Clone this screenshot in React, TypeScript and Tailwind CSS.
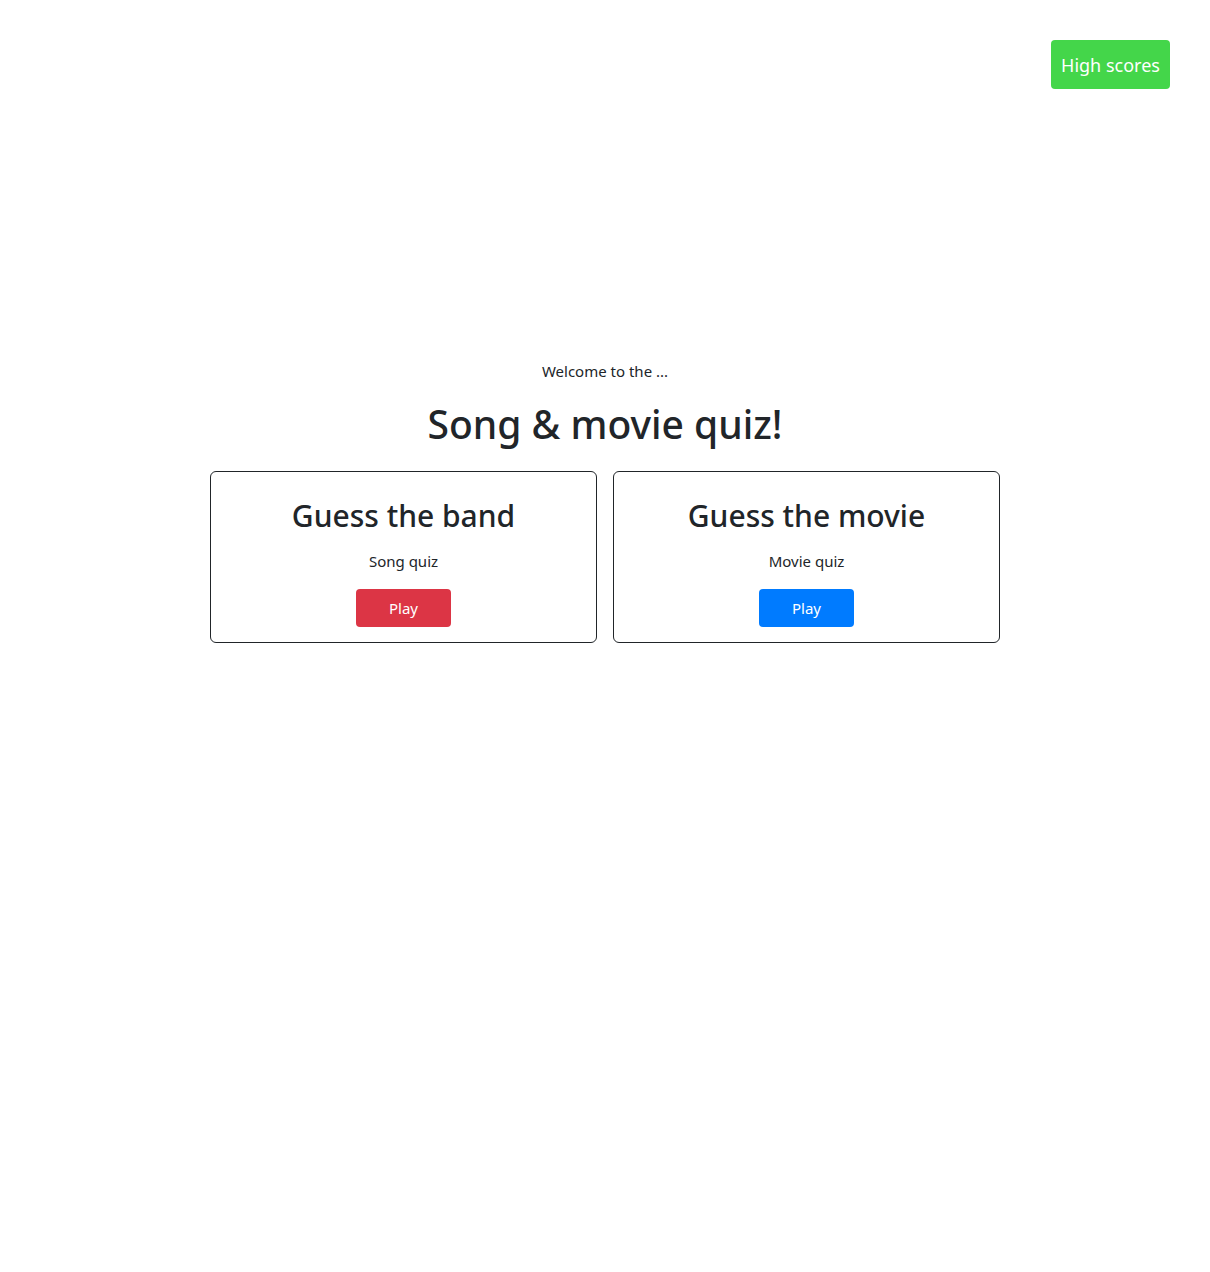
export default function App() {
  const quizzes = [
    { id: 1, title: "Guess the band", subtitle: "Song quiz", button: "bg-[#dc3545]" },
    { id: 2, title: "Guess the movie", subtitle: "Movie quiz", button: "bg-[#007bff]" },
  ];

  return (
    <div className="min-h-[1272px] bg-white text-[#212529] font-['Noto_Sans',sans-serif]">
      <div className="flex justify-end pt-[40px] pr-[40px]">
        <button className="h-[49px] w-[119px] rounded-[4px] bg-[#44d64a] pt-[1px] text-[18px] text-white">
          High scores
        </button>
      </div>

      <div className="mt-[270px] flex flex-col items-center">
        <p className="text-[15px] leading-[24px]">Welcome to the ...</p>
        <h1 className="mt-[17px] text-[39px] font-medium leading-[48px]">Song &amp; movie quiz!</h1>

        <div className="mt-[23px] flex gap-[16px]">
          {quizzes.map((quiz) => (
            <div
              key={quiz.id}
              className="flex h-[172px] w-[387px] flex-col items-center rounded-[6px] border border-[#212529] pt-[25px]"
            >
              <h2 className="text-[30px] font-medium leading-[38px]">{quiz.title}</h2>
              <p className="mt-[14px] text-[15px] leading-[24px]">{quiz.subtitle}</p>
              <button
                className={`mt-[16px] h-[38px] w-[95px] rounded-[4px] text-[15px] text-white ${quiz.button}`}
              >
                Play
              </button>
            </div>
          ))}
        </div>
      </div>
    </div>
  );
}
